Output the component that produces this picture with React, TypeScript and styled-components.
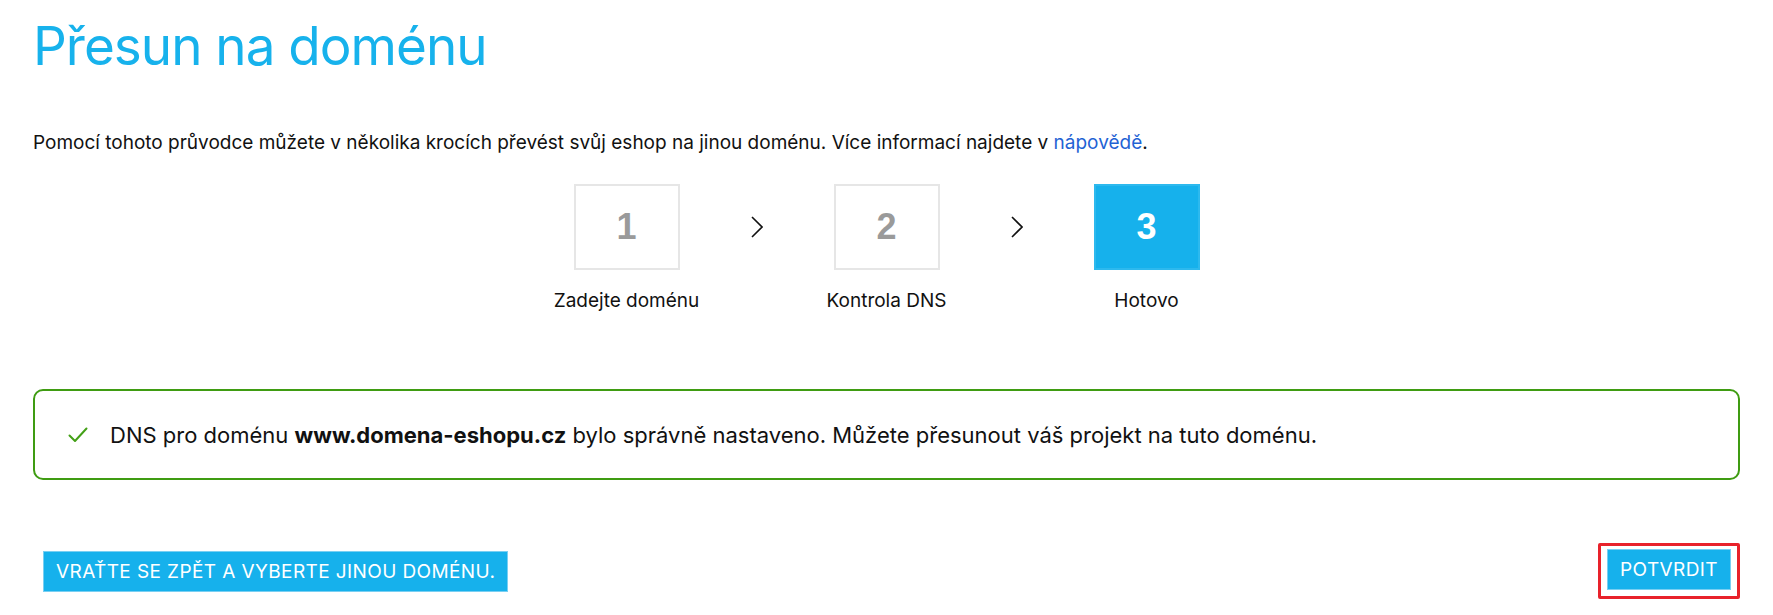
import React from "react";
import styled, { createGlobalStyle } from "styled-components";

const GlobalStyle = createGlobalStyle`
  body {
    margin: 0;
    background: #ffffff;
    font-family: Inter, "Noto Sans", sans-serif;
    color: #111111;
  }
`;

const steps = [
  { number: 1, label: "Zadejte doménu" },
  { number: 2, label: "Kontrola DNS" },
  { number: 3, label: "Hotovo" },
];

const ACTIVE_STEP = 3;

const CheckIcon = () => (
  <svg width="20" height="16" viewBox="0 0 20 16" fill="none">
    <polyline
      points="1.5,8.5 7,14 18.5,1.5"
      stroke="#43a017"
      strokeWidth="2"
      strokeLinecap="round"
      strokeLinejoin="round"
    />
  </svg>
);

const ChevronIcon = () => (
  <svg width="12" height="22" viewBox="0 0 12 22" fill="none">
    <polyline
      points="1,1 11,11 1,21"
      stroke="#111111"
      strokeWidth="1.6"
      strokeLinejoin="miter"
    />
  </svg>
);

const App: React.FC = () => {
  return (
    <>
      <GlobalStyle />
      <StyledPage>
        <StyledTitle>Přesun na doménu</StyledTitle>
        <StyledIntro>
          Pomocí tohoto průvodce můžete v několika krocích převést svůj eshop
          na jinou doménu. Více informací najdete v{" "}
          <StyledLink href="#">nápovědě</StyledLink>.
        </StyledIntro>

        <StyledSteps>
          {steps.map((step, i) => (
            <React.Fragment key={step.number}>
              {i > 0 && (
                <StyledArrow>
                  <ChevronIcon />
                </StyledArrow>
              )}
              <StyledStep>
                <StyledStepBox active={step.number === ACTIVE_STEP}>
                  {step.number}
                </StyledStepBox>
                <StyledStepLabel>{step.label}</StyledStepLabel>
              </StyledStep>
            </React.Fragment>
          ))}
        </StyledSteps>

        <StyledAlert>
          <CheckIcon />
          <StyledAlertText>
            DNS pro doménu <b>www.domena-eshopu.cz</b> bylo správně nastaveno.
            Můžete přesunout váš projekt na tuto doménu.
          </StyledAlertText>
        </StyledAlert>

        <StyledActions>
          <StyledButton>Vraťte se zpět a vyberte jinou doménu.</StyledButton>
          <StyledHighlight>
            <StyledButton>Potvrdit</StyledButton>
          </StyledHighlight>
        </StyledActions>
      </StyledPage>
    </>
  );
};

const StyledPage = styled.div`
  padding: 13px 33px 15px 33px;
`;

const StyledTitle = styled.h1`
  margin: 0;
  font-size: 53px;
  line-height: 66px;
  font-weight: 400;
  letter-spacing: -1px;
  color: #17b2ec;
`;

const StyledIntro = styled.p`
  margin: 52px 0 0 0;
  font-size: 19px;
  line-height: 24px;
  color: #111111;
`;

const StyledLink = styled.a`
  color: #1f63d4;
  text-decoration: none;
`;

const StyledSteps = styled.div`
  display: flex;
  justify-content: center;
  margin-top: 29px;
`;

const StyledStep = styled.div`
  width: 180px;
  display: flex;
  flex-direction: column;
  align-items: center;
`;

const StyledStepBox = styled.div<{ active?: boolean }>`
  box-sizing: border-box;
  width: 106px;
  height: 86px;
  display: flex;
  align-items: center;
  justify-content: center;
  border: 2px solid ${(props) => (props.active ? "#2db9ee" : "#e6e6e6")};
  background: ${(props) => (props.active ? "#16b1ec" : "#ffffff")};
  color: ${(props) => (props.active ? "#ffffff" : "#9a9a9a")};
  font-family: "Liberation Sans", Arial, sans-serif;
  font-weight: 700;
  font-size: 36px;
`;

const StyledStepLabel = styled.div`
  margin-top: 20px;
  font-size: 19px;
  line-height: 22px;
  color: #111111;
`;

const StyledArrow = styled.div`
  width: 80px;
  height: 86px;
  display: flex;
  align-items: center;
  justify-content: center;
`;

const StyledAlert = styled.div`
  box-sizing: border-box;
  margin-top: 77px;
  height: 91px;
  display: flex;
  align-items: center;
  gap: 22px;
  padding: 0 0 0 33px;
  border: 2px solid #3f9c12;
  border-radius: 10px;
`;

const StyledAlertText = styled.div`
  font-size: 22px;
  line-height: 28px;
  color: #111111;

  b {
    font-weight: 700;
  }
`;

const StyledActions = styled.div`
  display: flex;
  justify-content: space-between;
  align-items: center;
  margin-top: 63px;
  padding-left: 10px;
`;

const StyledButton = styled.button`
  box-sizing: border-box;
  height: 41px;
  padding: 0 12px;
  border: 1px solid #79cff2;
  background: #16b1ec;
  color: #ffffff;
  font-family: Inter, "Noto Sans", sans-serif;
  font-size: 19px;
  letter-spacing: 0.4px;
  text-transform: uppercase;
  cursor: pointer;
`;

const StyledHighlight = styled.div`
  padding: 3px 6px 6px 6px;
  border: 3px solid #e8222b;
  border-radius: 2px;
  display: flex;
`;

export default App;
